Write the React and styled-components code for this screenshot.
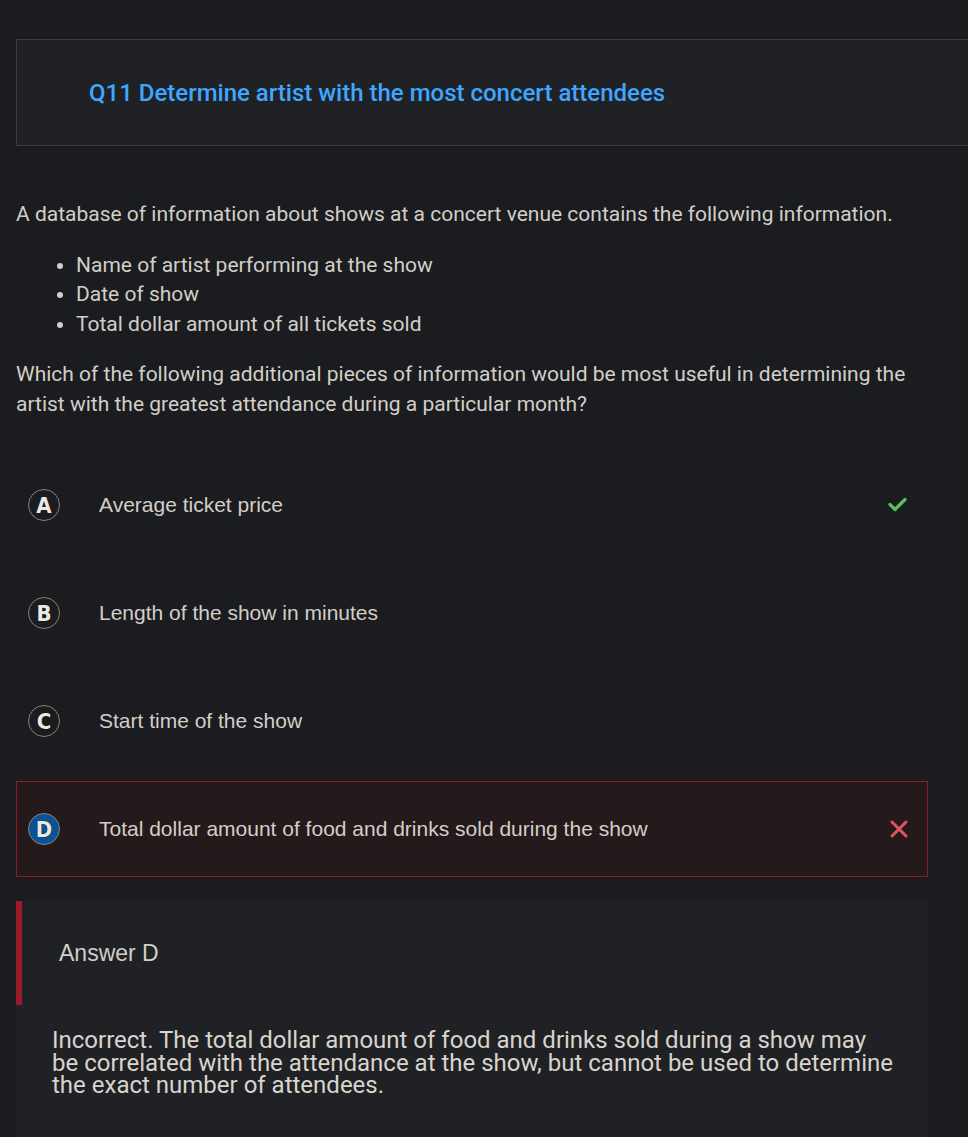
import React from "react";
import styled, { createGlobalStyle } from "styled-components";

const GlobalStyle = createGlobalStyle`
  html, body {
    margin: 0;
    padding: 0;
    background: #1b1c1f;
    overflow: hidden;
  }
`;

const Page = styled.div`
  width: 968px;
  min-height: 1137px;
  padding: 39px 40px 0 16px;
  box-sizing: border-box;
  font-family: Roboto, "Liberation Sans", sans-serif;
  color: #d2cec8;
`;

const Header = styled.div`
  height: 107px;
  margin-right: -60px;
  box-sizing: border-box;
  border: 1px solid #3b3c3f;
  background: #202124;
  display: flex;
  align-items: center;
  padding-left: 72px;
`;

const Title = styled.h1`
  margin: 0;
  font-size: 24px;
  font-weight: 500;
  color: #3ea6ff;
`;

const Para = styled.p`
  margin: ${(p) => p.$top || 0}px 0 0;
  font-size: 21px;
  line-height: 29.5px;
`;

const List = styled.ul`
  margin: 21px 0 0;
  padding-left: 60px;
  font-size: 21px;
  line-height: 29.5px;
`;

const Options = styled.div`
  margin-top: 38px;
  display: flex;
  flex-direction: column;
  gap: 12px;
`;

const Option = styled.div`
  height: 96px;
  box-sizing: border-box;
  border: 1px solid ${(p) => (p.$wrong ? "#8e1b27" : "transparent")};
  background: ${(p) => (p.$wrong ? "#241a1c" : "transparent")};
  display: flex;
  align-items: center;
  padding: 0 18px 0 11px;
  font-family: "Liberation Sans", Arial, sans-serif;
  font-size: 21px;
`;

const Badge = styled.span`
  width: 32px;
  height: 32px;
  box-sizing: border-box;
  border-radius: 50%;
  border: 1px solid #8a7f70;
  background: ${(p) => (p.$picked ? "#0c5296" : "transparent")};
  display: flex;
  align-items: center;
  justify-content: center;
  font-family: "DejaVu Sans Condensed", "DejaVu Sans", Roboto, sans-serif;
  font-stretch: condensed;
  font-weight: 700;
  font-size: 22px;
  color: #ece8e2;
  text-shadow: 0 0 1px #000;
  flex-shrink: 0;
`;

const OptionText = styled.span`
  margin-left: 39px;
  flex: 1;
`;

const Explain = styled.div`
  margin-top: 24px;
  background: #202124;
  min-height: 236px;
`;

const AnswerHead = styled.div`
  height: 104px;
  border-left: 6px solid #9a1a27;
  display: flex;
  align-items: center;
  padding-left: 37px;
  font-family: "Liberation Sans", Arial, sans-serif;
  font-size: 23px;
  color: #d2cec8;
`;

const Feedback = styled.p`
  margin: 24px 0 0;
  padding: 0 30px 0 36px;
  font-size: 24px;
  line-height: 22.5px;
  color: #d8d4ce;
`;

const CheckIcon = () => (
  <svg width="22" height="18" viewBox="0 0 22 18">
    <polyline
      points="3,8.5 8,13.5 18,3.5"
      fill="none"
      stroke="#5bbf5e"
      strokeWidth="3.2"
      strokeLinecap="round"
      strokeLinejoin="round"
    />
  </svg>
);

const CrossIcon = () => (
  <svg width="20" height="20" viewBox="0 0 20 20">
    <path
      d="M3 3 L17 17 M17 3 L3 17"
      stroke="#e2525f"
      strokeWidth="3"
      strokeLinecap="round"
    />
  </svg>
);

const options = [
  { key: "A", text: "Average ticket price", correct: true },
  { key: "B", text: "Length of the show in minutes" },
  { key: "C", text: "Start time of the show" },
  { key: "D", text: "Total dollar amount of food and drinks sold during the show", wrong: true },
];

export default function App() {
  return (
    <Page>
      <GlobalStyle />
      <Header>
        <Title>Q11 Determine artist with the most concert attendees</Title>
      </Header>
      <Para $top={54}>
        A database of information about shows at a concert venue contains the following information.
      </Para>
      <List>
        <li>Name of artist performing at the show</li>
        <li>Date of show</li>
        <li>Total dollar amount of all tickets sold</li>
      </List>
      <Para $top={21}>
        Which of the following additional pieces of information would be most useful in determining the
        artist with the greatest attendance during a particular month?
      </Para>
      <Options>
        {options.map((o) => (
          <Option key={o.key} $wrong={o.wrong}>
            <Badge $picked={o.wrong}>{o.key}</Badge>
            <OptionText>{o.text}</OptionText>
            {o.correct && <CheckIcon />}
            {o.wrong && <CrossIcon />}
          </Option>
        ))}
      </Options>
      <Explain>
        <AnswerHead>Answer D</AnswerHead>
        <Feedback>
          Incorrect. The total dollar amount of food and drinks sold during a show may be correlated with the
          attendance at the show, but cannot be used to determine the exact number of attendees.
        </Feedback>
      </Explain>
    </Page>
  );
}
